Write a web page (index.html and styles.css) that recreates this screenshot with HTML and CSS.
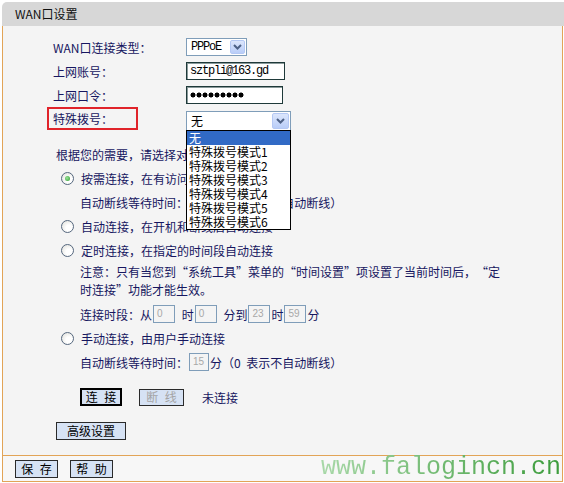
FILE: index.html
```html
<!DOCTYPE html>
<html lang="zh-CN">
<head>
    <meta charset="UTF-8">
    <meta name="viewport" content="width=device-width, initial-scale=1.0">
    <title>WAN口设置</title>
    <link rel="stylesheet" href="styles.css">
</head>
<body>
    <div class="page">
        <div class="title">WAN口设置</div>

        <div class="panel">
            <div class="fields">
                <div class="label">WAN口连接类型：</div>
                <div class="ctl">
                    <div class="select sel-type">
                        <span class="val">PPPoE</span>
                        <span class="arrow"><svg width="9" height="6" viewBox="0 0 9 6"><polyline points="1,1 4.5,4.5 8,1" fill="none" stroke="#4d6185" stroke-width="2"/></svg></span>
                    </div>
                </div>

                <div class="label">上网账号：</div>
                <div class="ctl"><div class="text acct">sztpli@163.gd</div></div>

                <div class="label">上网口令：</div>
                <div class="ctl"><div class="text pass"><span class="dots" aria-label="●●●●●●●●●"></span></div></div>

                <div class="label"><span class="mark">特殊拨号：</span></div>
                <div class="ctl">
                    <div class="select sel-dial">
                        <span class="val cn">无</span>
                        <span class="arrow"><svg width="9" height="6" viewBox="0 0 9 6"><polyline points="1,1 4.5,4.5 8,1" fill="none" stroke="#4d6185" stroke-width="2"/></svg></span>
                    </div>
                </div>
            </div>

            <div class="intro">根据您的需要，请选择对应的连接模式：</div>

            <div class="opt"><span class="radio on"></span>按需连接，在有访问时自动连接</div>
            <div class="sub">自动断线等待时间：<span class="box">15</span>分（0 表示不自动断线）</div>
            <div class="opt"><span class="radio"></span>自动连接，在开机和断线后自动连接</div>
            <div class="opt"><span class="radio"></span>定时连接，在指定的时间段自动连接</div>
            <p class="note">注意：只有当您到“系统工具”菜单的“时间设置”项设置了当前时间后，“定<br>时连接”功能才能生效。</p>
            <div class="sub period">连接时段：从<span class="box">0</span> 时<span class="box">0</span> 分到<span class="box">23</span>时<span class="box">59</span>分</div>
            <div class="opt"><span class="radio"></span>手动连接，由用户手动连接</div>
            <div class="sub">自动断线等待时间：<span class="box">15</span>分（0 表示不自动断线）</div>

            <div class="actions">
                <button class="btn btn-default">连 接</button>
                <button class="btn btn-off">断 线</button>
                <span class="status">未连接</span>
            </div>
            <div class="adv"><button class="btn">高级设置</button></div>

            <ul class="dropdown">
                <li class="hl">无</li>
                <li>特殊拨号模式1</li>
                <li>特殊拨号模式2</li>
                <li>特殊拨号模式3</li>
                <li>特殊拨号模式4</li>
                <li>特殊拨号模式5</li>
                <li>特殊拨号模式6</li>
            </ul>
        </div>

        <div class="footer">
            <button class="btn">保 存</button>
            <button class="btn">帮 助</button>
            <span class="watermark">www.falogincn.cn</span>
        </div>
    </div>
</body>
</html>
```

FILE: styles.css
```css
body {
    margin: 0;
    background: #fff;
    font-family: "Noto Sans CJK SC", sans-serif;
    font-size: 12px;
    color: #161660;
    text-spacing-trim: space-all;
    word-spacing: 3px;
}

.page {
    width: 562px;
    margin: 2px 0 0 2px;
}

.title {
    height: 24px;
    line-height: 23px;
    padding-left: 13px;
    background: #d7d7d7;
    border-radius: 5px 0 0 0;
    color: #111;
}

.panel {
    position: relative;
    width: 559px;
    height: 420px;
    padding-top: 9px;
    background: #f4f4f4;
    border-left: 1px solid #e2a457;
    border-right: 1px solid #e2a457;
}

/* form rows */
.fields {
    display: grid;
    grid-template-columns: 133px auto;
    grid-auto-rows: 24px;
    padding-left: 50px;
}

.label {
    display: flex;
    align-items: center;
}

.ctl {
    display: flex;
    align-items: center;
}

.mark {
    display: flex;
    align-items: center;
    box-sizing: border-box;
    width: 91px;
    height: 23px;
    margin: 0 0 1px -6px;
    padding-left: 4px;
    border: 2px solid #e0232a;
}

.select {
    display: flex;
    align-items: center;
    justify-content: space-between;
    box-sizing: border-box;
    height: 18px;
    padding: 1px;
    background: #fff;
    border: 1px solid #7f9db9;
}

.sel-type {
    width: 61px;
}

.sel-dial {
    width: 105px;
    height: 20px;
    margin-top: 3px;
}

.val {
    padding-left: 3px;
    font-family: "Liberation Mono", monospace;
    font-size: 12px;
    letter-spacing: -1.2px;
    color: #000;
}

.val.cn {
    font-family: "Noto Sans CJK SC", sans-serif;
    letter-spacing: 0;
}

.arrow {
    display: flex;
    align-items: center;
    justify-content: center;
    width: 15px;
    height: 14px;
    box-sizing: border-box;
    background: linear-gradient(#dce6fc, #b9cdf8);
    border: 1px solid #b4c8f4;
    border-radius: 2px;
}

.sel-dial .arrow {
    height: 16px;
    width: 17px;
}

.text {
    display: flex;
    align-items: center;
    box-sizing: border-box;
    height: 18px;
    padding-left: 3px;
    background: #fff;
    border: 1px solid #1f3a3a;
    box-shadow: inset 1px 1px 0 #8a9a9a;
    font-family: "Liberation Mono", monospace;
    font-size: 12px;
    letter-spacing: -1.2px;
    color: #000;
}

.acct {
    width: 99px;
}

.pass {
    width: 97px;
}

.dots {
    display: block;
    width: 54px;
    height: 6px;
    background: radial-gradient(circle, #000 2.2px, transparent 2.8px) 0 0 / 6px 6px repeat-x;
}

/* connection modes */
.intro {
    height: 22px;
    line-height: 22px;
    margin-top: 13px;
    padding-left: 53px;
}

.opt {
    display: flex;
    align-items: center;
    gap: 7px;
    height: 24px;
    padding-left: 58px;
}

.sub {
    display: flex;
    align-items: center;
    height: 24px;
    padding-left: 77px;
    white-space: pre;
}

.period {
    margin-top: 3px;
}

.radio {
    position: relative;
    width: 11px;
    height: 11px;
    border: 1px solid #55677e;
    border-radius: 50%;
    background: radial-gradient(circle at 65% 65%, #fff 30%, #dcdcd6 100%);
}

.radio.on::after {
    content: "";
    position: absolute;
    left: 3px;
    top: 3px;
    width: 5px;
    height: 5px;
    border-radius: 50%;
    background: radial-gradient(circle at 40% 40%, #9be39b, #2a9a2a);
}

.box {
    display: inline-block;
    box-sizing: border-box;
    width: 20px;
    height: 18px;
    margin: 0 1px;
    padding-left: 3px;
    line-height: 16px;
    border: 1px solid #7f9db9;
    background: #f4f4f4;
    font-family: "Liberation Sans", sans-serif;
    font-size: 10px;
    word-spacing: 0;
    color: #a8a8a8;
}

.period .box {
    width: 22px;
}

.note {
    margin: 1px 0 0;
    padding-left: 77px;
    line-height: 18px;
}

/* buttons */
.actions {
    display: flex;
    align-items: center;
    gap: 17px;
    height: 18px;
    margin-top: 14px;
    padding-left: 77px;
}

.btn {
    box-sizing: border-box;
    height: 17px;
    padding: 0;
    font-family: "Noto Sans CJK SC", sans-serif;
    font-size: 12px;
    line-height: 14px;
    word-spacing: 4px;
    white-space: nowrap;
    color: #000;
    background: #d6e2f4;
    border: 1px solid #2a2a2a;
    border-radius: 0;
}

.btn-default {
    width: 42px;
    height: 18px;
    border: 2px solid #000;
}

.btn-off {
    width: 45px;
    color: #a4a4a4;
}

.status {
    margin-left: 1px;
}

.adv {
    margin-top: 16px;
    padding-left: 53px;
}

.adv .btn {
    width: 70px;
    height: 18px;
}

/* open select list */
.dropdown {
    position: absolute;
    left: 183px;
    top: 104px;
    width: 103px;
    margin: 0;
    padding: 0;
    list-style: none;
    background: #fff;
    border: 1px solid #000;
}

.dropdown li {
    height: 14px;
    line-height: 14px;
    padding-left: 2px;
    color: #000;
}

.dropdown li.hl {
    background: #316ac5;
    color: #fff;
}

/* footer */
.footer {
    position: relative;
    display: flex;
    align-items: center;
    gap: 12px;
    width: 547px;
    height: 25px;
    padding-left: 12px;
    background: #f7f7f7;
    border: 1px solid #e2a457;
}

.footer .btn {
    width: 43px;
    height: 18px;
}

.watermark {
    position: absolute;
    right: 1px;
    top: -2px;
    font-family: "Liberation Mono", monospace;
    font-size: 25px;
    line-height: 28px;
    word-spacing: 0;
    background: linear-gradient(90deg, #a8d8a8, #3c9c3c);
    -webkit-background-clip: text;
    background-clip: text;
    color: transparent;
}
```
